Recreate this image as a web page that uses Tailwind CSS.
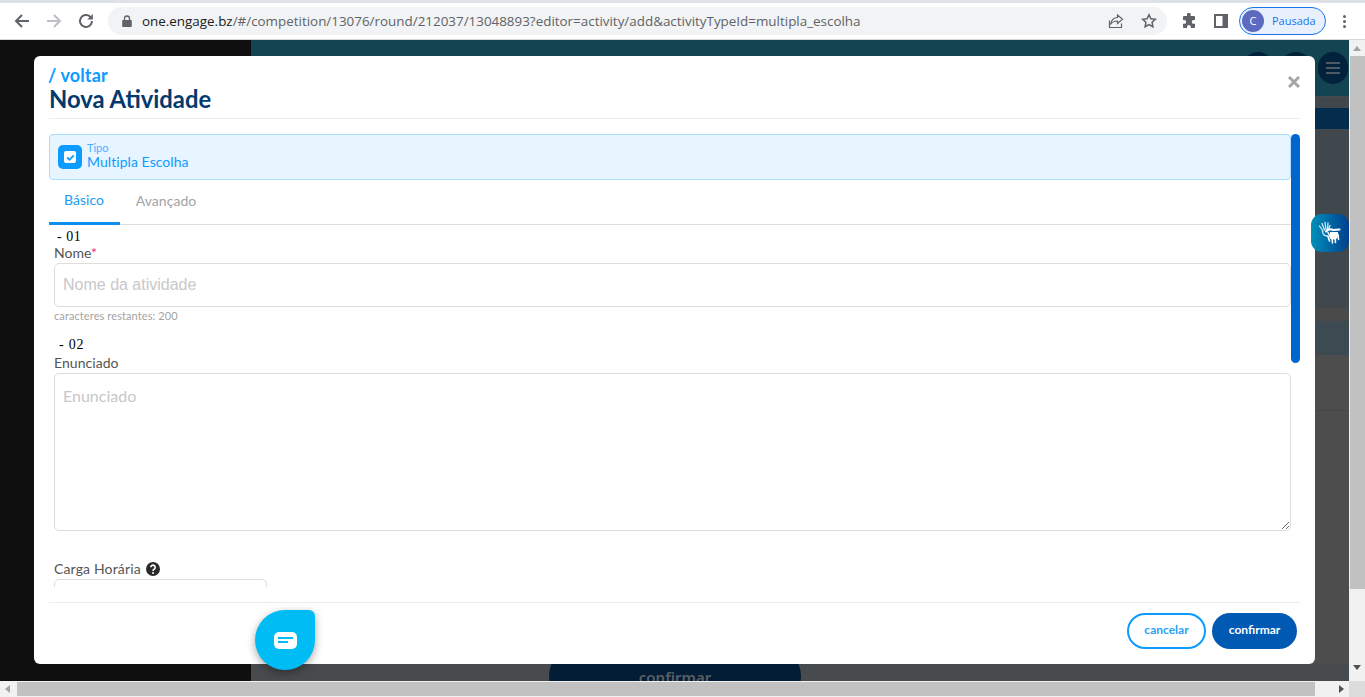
<!DOCTYPE html>
<html lang="pt-BR">
<head>
    <meta charset="UTF-8" />
    <meta name="viewport" content="width=device-width, initial-scale=1" />
    <title>Nova Atividade</title>
    <script src="https://cdn.jsdelivr.net/npm/@tailwindcss/browser@4"></script>
</head>
<body class="h-[697px] w-[1365px] overflow-hidden bg-white font-['Noto_Sans',sans-serif]">

    <!-- browser toolbar -->
    <div class="h-[3px] bg-[#dee1e6]"></div>
    <header class="flex h-[36px] items-center bg-white">
        <div class="flex w-[108px] items-center pl-[13px] gap-[14px]">
            <svg class="h-[18px] w-[18px]" viewBox="0 0 18 18" fill="none" stroke="#5f6368" stroke-width="2"><path d="M16 9H3M9 3L3 9l6 6"/></svg>
            <svg class="h-[18px] w-[18px]" viewBox="0 0 18 18" fill="none" stroke="#bcbfc3" stroke-width="2"><path d="M2 9h13M9 3l6 6-6 6"/></svg>
            <svg class="h-[18px] w-[18px]" viewBox="0 0 18 18" fill="none" stroke="#5f6368" stroke-width="2"><path d="M15 9a6 6 0 1 1-1.8-4.3L15 6.5"/><path d="M15.8 2v5.5h-5.5" fill="#5f6368" stroke="none"/></svg>
        </div>
        <div class="flex h-[28px] w-[1059px] items-center rounded-full bg-[#f1f3f4] pl-[13px] pr-[10px]">
            <svg class="h-[12px] w-[12px]" viewBox="0 0 12 12" fill="#5f6368"><path d="M2 5h8a.8.8 0 0 1 .8.8v5.4a.8.8 0 0 1-.8.8H2a.8.8 0 0 1-.8-.8V5.800A.8.8 0 0 1 2 5z"/><path d="M3.500 5V3.500a2.500 2.500 0 0 1 5 0V5" fill="none" stroke="#5f6368" stroke-width="1.300"/></svg>
            <span class="ml-[9px] font-['Open_Sans',sans-serif] text-[13.420px] text-[#5f6368]"><span class="text-[#202124]">one.engage.bz</span>/#/competition/13076/round/212037/13048893?editor=activity/add&amp;activityTypeId=multipla_escolha</span>
            <div class="ml-auto flex items-center gap-[17px]">
                <svg class="h-[16px] w-[16px]" viewBox="0 0 16 16" fill="none" stroke="#5f6368" stroke-width="1.200"><path d="M1.500 7.500v7h12v-4"/><path d="M9.500 2l5 4.200-5 4.200V8c-3.500 0-5.500 1-7 3.500C3 8 5 4.700 9.500 4.500z"/></svg>
                <svg class="h-[16px] w-[16px]" viewBox="0 0 16 16" fill="none" stroke="#5f6368" stroke-width="1.500"><path d="M8 1.800l1.900 4 4.400.5-3.200 3 .8 4.400L8 11.500l-3.900 2.200.8-4.400-3.200-3 4.400-.5z"/></svg>
            </div>
        </div>
        <svg class="ml-[14px] h-[16px] w-[16px]" viewBox="0 0 16 16" fill="#5f6368"><path d="M6 1.500a1.800 1.800 0 0 1 3.600 0V3H13a1 1 0 0 1 1 1v3h-1.300a1.900 1.900 0 0 0 0 3.800H14v3.200a1 1 0 0 1-1 1H9.800v-1.200a1.900 1.900 0 0 0-3.800 0V15H3a1 1 0 0 1-1-1v-3.200h1.300a1.900 1.900 0 0 0 0-3.800H2V4a1 1 0 0 1 1-1h3z"/></svg>
        <svg class="ml-[17px] h-[14px] w-[14px]" viewBox="0 0 14 14"><path d="M0 0h14v14H0z" fill="#5f6368"/><path d="M2 2h6.500v10H2z" fill="#fff"/></svg>
        <div class="ml-[11px] flex h-[28px] w-[87px] items-center rounded-full border border-[#1a73e8] bg-[#e8f0fe] pl-[2px]">
            <span class="flex h-[22px] w-[22px] items-center justify-center rounded-full bg-[#5c6bc0] font-['Open_Sans',sans-serif] text-[11px] text-white">C</span>
            <span class="ml-[8px] font-['Open_Sans',sans-serif] text-[11px] text-[#1a73e8]">Pausada</span>
        </div>
        <div class="ml-[17px] flex flex-col gap-[2px]">
            <span class="h-[3px] w-[3px] rounded-full bg-[#5f6368]"></span>
            <span class="h-[3px] w-[3px] rounded-full bg-[#5f6368]"></span>
            <span class="h-[3px] w-[3px] rounded-full bg-[#5f6368]"></span>
        </div>
    </header>
    <div class="h-px bg-[#d5d7da]"></div>

    <!-- page -->
    <div class="relative h-[641px] w-[1365px]">
        <div class="flex h-full">
            <div class="w-[251px] bg-[#0f0f0f]"></div>
            <div class="flex w-[1098px] flex-col bg-[#4d4d4d]">
                <div class="flex h-[56px] shrink-0 items-start justify-end gap-[6px] bg-[#134452] pr-px pt-[12px]">
                    <span class="h-[32px] w-[32px] rounded-full bg-[#02213a]"></span>
                    <span class="h-[32px] w-[32px] rounded-full bg-[#02213a]"></span>
                    <span class="flex h-[32px] w-[30px] flex-col items-center justify-center gap-[3px] rounded-full bg-[#02213a]">
                        <span class="h-[2px] w-[14px] bg-[#4d5963]"></span>
                        <span class="h-[2px] w-[14px] bg-[#4d5963]"></span>
                        <span class="h-[2px] w-[14px] bg-[#4d5963]"></span>
                    </span>
                </div>
                <div class="h-[259px] shrink-0 border-t border-[#4a4a4a] bg-[#40484d] pt-[11px]">
                    <div class="ml-auto h-[21px] w-[100px] rounded-l-full rounded-r-[10px] bg-[#042d4d]"></div>
                    <div class="mt-[179px] h-[13px] bg-[#4a4a4a]"></div>
                    <div class="h-[34px] bg-[#3e4a52]"></div>
                </div>
                <div class="h-[56px] shrink-0 border-b border-[#464646]"></div>
                <div class="mt-auto flex h-[17px] justify-center overflow-hidden bg-[#484b4d] pr-[250px]">
                    <div class="-mt-[18px] h-[60px] w-[252px] shrink-0 rounded-[30px] bg-[#021d35] text-center text-[15px] font-semibold leading-[62px] text-[#585f66]">confirmar</div>
                </div>
            </div>
            <!-- vertical scrollbar -->
            <div class="flex w-[16px] flex-col items-center bg-[#f1f1f1]">
                <svg class="mt-[6px] h-[5px] w-[8px]" viewBox="0 0 8 5" fill="#a3a3a3"><path d="M4 0l4 5H0z"/></svg>
                <div class="mt-[5px] h-[533px] w-[15px] bg-[#c1c1c1]"></div>
                <svg class="mt-[76px] h-[5px] w-[8px]" viewBox="0 0 8 5" fill="#505050"><path d="M0 0h8L4 5z"/></svg>
            </div>
        </div>

        <!-- vlibras widget -->
        <div class="absolute left-[1311px] top-[174px] z-20 flex h-[38px] w-[38px] items-center justify-center rounded-[11px] bg-gradient-to-r from-[#0090b8] to-[#003f8f]">
            <svg class="h-[24px] w-[24px]" viewBox="0 0 24 24" fill="none" stroke="#fff" stroke-linecap="round">
                <g stroke-width="1.300" stroke="#d5ecf5">
                    <path d="M1.500 5l3.500 5M4 2.500l2.500 6.500M7 1.500l1 7M10 2l-.5 6.500M4.500 10c0 3 2 5 5 5"/>
                    <path d="M12 4.500L10 9"/>
                </g>
                <path d="M8 10.500c2-2 5-2.500 7-1.500l6.500-.5" stroke-width="2"/>
                <path d="M10 11.500l3 6M10 15.500l1.500 4.500M14 16l.5 6M17 15.500l.5 6M20 13.500l.5 5" stroke-width="1.600"/>
                <path d="M12 11h8v4c0 2-2 3.500-4 3.500s-4-1.500-4-3.500z" fill="#fff" stroke="none"/>
            </svg>
        </div>

        <!-- modal -->
        <section class="absolute left-[34px] top-[16px] flex h-[608px] w-[1281px] flex-col rounded-[6px] bg-white px-[15px]">
            <div class="relative h-[63px] shrink-0 border-b border-[#ececec] pt-[9px]">
                <a class="-ml-px block font-['Lato',sans-serif] text-[18px] font-bold leading-[20px] tracking-[0.1px] text-[#0d9bff]">/ voltar</a>
                <h2 class="font-['Lato',sans-serif] text-[23.800px] font-bold leading-[28px] text-[#023a6e]">Nova Atividade</h2>
                <svg class="absolute right-0 top-[20px] h-[12px] w-[12px]" viewBox="0 0 12 12" stroke="#a6a6a6" stroke-width="3"><path d="M1 1l10 10M11 1L1 11"/></svg>
            </div>

            <div class="relative mb-[15px] min-h-0 flex-1 overflow-hidden">
                <!-- modal scrollbar -->
                <div class="absolute right-0 top-[15px] h-[229px] w-[9px] rounded-full bg-[#0066cc]"></div>

                <div class="mr-[9px] mt-[15px] flex h-[46px] items-center rounded-[4px] border border-[#a9dcff] bg-[#e6f5ff] pl-[8px]">
                    <span class="flex h-[24px] w-[24px] items-center justify-center rounded-[5px] bg-[#0d9bff]">
                        <span class="flex h-[12px] w-[12px] items-center justify-center rounded-[2px] bg-white">
                            <svg class="h-[9px] w-[9px]" viewBox="0 0 9 9" fill="none" stroke="#0d9bff" stroke-width="1.800"><path d="M1.200 4.500l2.300 2.300 4.300-4.500"/></svg>
                        </span>
                    </span>
                    <div class="-mt-[3px] ml-[5px] font-['Lato',sans-serif] text-[#0d9bff]">
                        <p class="text-[11px] leading-[11px] opacity-75">Tipo</p>
                        <p class="text-[14px] leading-[17px] tracking-[0.06px]">Multipla Escolha</p>
                    </div>
                </div>

                <nav class="mr-[9px] flex h-[45px] border-b border-[#dedede] font-['Lato',sans-serif] text-[14px] tracking-[0.05px]">
                    <a class="flex h-[45px] w-[71px] items-center justify-center border-b-[3px] border-[#0d8fef] pb-[4px] pr-px text-[#1a9bf5]">Básico</a>
                    <a class="flex w-[93px] items-center justify-center pb-[4px] pr-px text-[#a3a3a3]">Avançado</a>
                </nav>

                <div class="pl-[5px] pr-[9px] font-['Lato',sans-serif]">
                    <p class="ml-[3px] mt-[4px] font-['Liberation_Serif',serif] text-[14px] leading-[16px] tracking-[0.5px] text-black">- 01</p>
                    <label class="-mt-[3px] block text-[14px] leading-[21px] text-[#555]">Nome<span class="text-[#f0305f]">*</span></label>
                    <input class="block h-[44px] w-full rounded-[5px] border border-[#dedede] px-[8px] font-['Liberation_Sans',sans-serif] text-[16px] placeholder:text-[#c8c8c8]" placeholder="Nome da atividade" />
                    <p class="mt-[1px] text-[11px] leading-[16px] tracking-[0.1px] text-[#a3a3a3]">caracteres restantes: 200</p>

                    <p class="ml-[5px] mt-[13px] font-['Liberation_Serif',serif] text-[14px] leading-[16px] tracking-[0.8px] text-black">- 02</p>
                    <label class="block pb-px text-[14px] leading-[19px] tracking-[0.05px] text-[#555]">Enunciado</label>
                    <textarea class="block h-[158px] w-full rounded-[5px] border border-[#dedede] px-[8px] py-[10px] text-[16px] placeholder:text-[#c8c8c8]" placeholder="Enunciado"></textarea>

                    <label class="mt-[28px] flex items-center gap-[5px] text-[14px] leading-[20px] tracking-[0.15px] text-[#555]">Carga Horária
                        <svg class="h-[14px] w-[14px]" viewBox="0 0 14 14"><circle cx="7" cy="7" r="7" fill="#2b2b2b"/><path d="M4.800 5.300a2.200 2.200 0 1 1 3.400 1.900c-.8.500-1.200.8-1.200 1.700" fill="none" stroke="#fff" stroke-width="1.600"/><circle cx="7" cy="11" r="1" fill="#fff"/></svg>
                    </label>
                    <div class="h-[30px] w-[213px] rounded-[5px] border border-[#dedede]"></div>
                </div>
            </div>

            <footer class="flex h-[62px] shrink-0 items-start justify-end gap-[6px] border-t border-[#ececec] pr-[3px] pt-[10px] font-['Lato',sans-serif] text-[12px] font-bold">
                <button class="h-[36px] w-[79px] rounded-full border-2 border-[#0d9bff] pb-[2px] text-[#2a9ff5]">cancelar</button>
                <button class="h-[36px] w-[85px] rounded-full bg-[#0059b3] pb-[2px] text-white">confirmar</button>
            </footer>
        </section>

        <!-- chat button -->
        <button class="absolute left-[255px] top-[570px] z-20 flex h-[60px] w-[60px] items-center justify-center rounded-[30px] rounded-tr-[6px] bg-[#00bcf5] shadow-[0_3px_8px_rgba(0,0,0,0.35)]">
            <span class="flex h-[17px] w-[23px] flex-col gap-[2px] rounded-[5px] bg-white pl-[4px] pt-[5px]">
                <span class="h-[2px] w-[15px] bg-[#00bcf5]"></span>
                <span class="h-[2px] w-[10px] bg-[#00bcf5]"></span>
            </span>
        </button>
    </div>

    <!-- horizontal scrollbar -->
    <div class="flex h-[16px] items-center bg-[#f1f1f1]">
        <svg class="ml-[5px] h-[8px] w-[5px]" viewBox="0 0 5 8" fill="#a3a3a3"><path d="M5 0v8L0 4z"/></svg>
        <div class="ml-[7px] h-[14px] w-[1298px] bg-[#c1c1c1]"></div>
        <svg class="ml-[24px] h-[8px] w-[5px]" viewBox="0 0 5 8" fill="#505050"><path d="M0 0v8l5-4z"/></svg>
        <div class="ml-[5px] h-full w-[16px] bg-[#dcdcdc]"></div>
    </div>
</body>
</html>
